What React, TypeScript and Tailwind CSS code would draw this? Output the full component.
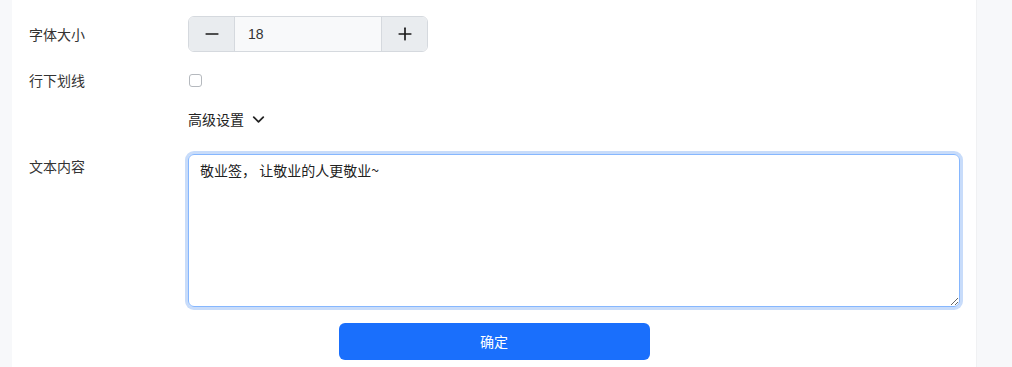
import React from "react";
import { ChevronDown, Minus, Plus } from "lucide-react";

export default function App() {
  const font = { fontFamily: '"Noto Sans CJK SC", "Microsoft YaHei", "Liberation Sans", sans-serif' };
  return (
    <div className="flex h-[367px] w-[1012px] bg-[#f7f8fa] pl-[12px]" style={font}>
      <div className="w-[965px] h-full bg-white border-r border-[#f0f1f3] pt-[16px] text-[14px] text-[#333]">
        {/* Row 1 */}
        <div className="flex items-center h-[36px]">
          <div className="w-[176px] pl-[17px]">字体大小</div>
          <div className="flex h-[36px] w-[240px] rounded-[6px] border border-[#d5d9de] overflow-hidden">
            <button className="w-[46px] flex items-center justify-center bg-[#e9ecef] border-r border-[#d5d9de] text-[#1a1a1a]">
              <Minus size={20} strokeWidth={2} />
            </button>
            <div className="flex-1 bg-[#f8f9fa] flex items-center pl-[13px] text-[14px] text-[#333]" style={{ fontFamily: '"Liberation Sans", Arial, sans-serif' }}>18</div>
            <button className="w-[46px] flex items-center justify-center bg-[#e9ecef] border-l border-[#d5d9de] text-[#1a1a1a]">
              <Plus size={20} strokeWidth={2} />
            </button>
          </div>
        </div>
        {/* Row 2 */}
        <div className="flex items-center h-[24px] mt-[16px]">
          <div className="w-[176px] pl-[17px]">行下划线</div>
          <div className="w-[13px] h-[13px] ml-[1px] rounded-[3px] border border-[#b5b9be] bg-white"></div>
        </div>
        {/* Row 3 */}
        <div className="flex items-center h-[24px] mt-[15px]">
          <div className="w-[176px]"></div>
          <div className="flex items-center gap-[5px] text-[#222]">
            <span>高级设置</span>
            <ChevronDown size={19} strokeWidth={2.2} />
          </div>
        </div>
        {/* Row 4 */}
        <div className="flex mt-[23px]">
          <div className="w-[176px] pl-[17px] pt-[2px]">文本内容</div>
          <textarea
            className="w-[772px] h-[153px] rounded-[6px] border border-[#86b7fe] shadow-[0_0_0_3px_#c8dcfa] outline-none px-[11px] py-[5px] text-[14px] text-[#222] leading-[1.5]"
            style={font}
            defaultValue="敬业签， 让敬业的人更敬业~"
          />
        </div>
        {/* Row 5 */}
        <div className="flex justify-center mt-[16px]">
          <button className="w-[311px] h-[37px] rounded-[6px] bg-[#1a6ffc] text-white text-[14px]">确定</button>
        </div>
      </div>
    </div>
  );
}
